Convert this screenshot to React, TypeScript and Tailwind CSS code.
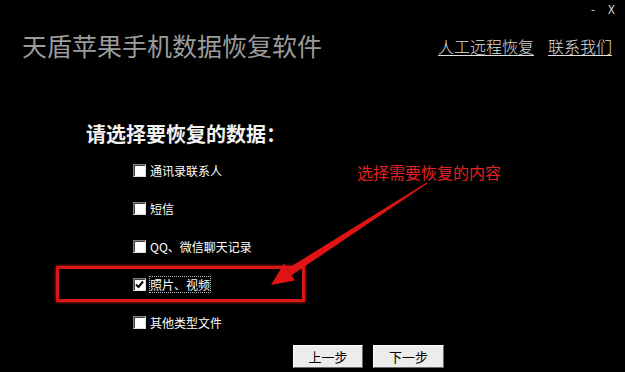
import { useState } from "react"

const items = ["通讯录联系人", "短信", "QQ、微信聊天记录", "照片、视频", "其他类型文件"]

function Box({ checked }: { checked: boolean }) {
  return (
    <span className="w-[13px] h-[13px] bg-white border border-t-[#808080] border-l-[#808080] border-b-[#e0e0e0] border-r-[#e0e0e0] shadow-[inset_1px_1px_0_#404040] flex items-center justify-center shrink-0">
      {checked && (
        <svg width="9" height="9" viewBox="0 0 9 9">
          <path d="M1 4.5 L3.5 7 L8 1.5" stroke="#000" strokeWidth="2" fill="none" />
        </svg>
      )}
    </span>
  )
}

export default function App() {
  const [sel, setSel] = useState([false, false, false, true, false])

  return (
    <div className="relative w-[625px] h-[372px] bg-black overflow-hidden font-['Noto_Sans_CJK_SC',sans-serif]">
      {/* window controls */}
      <div className="h-[18px] pt-[2px] flex justify-end items-start gap-[13px] pr-[10px] text-[12px] leading-[14px] text-[#d8d8d8]">
        <span>-</span>
        <span>X</span>
      </div>

      {/* header */}
      <div className="mt-[12px] h-[30px] flex items-center justify-between pl-[22px] pr-[13px]">
        <h1 className="text-[25px] leading-[30px] text-[#9c9c9c]">天盾苹果手机数据恢复软件</h1>
        <div className="flex gap-[14px] text-[16px] leading-[20px] font-light text-[#dedede] mt-[2px]">
          <a className="underline underline-offset-2 cursor-pointer">人工远程恢复</a>
          <a className="underline underline-offset-2 cursor-pointer">联系我们</a>
        </div>
      </div>

      <h2 className="mt-[62px] pl-[86px] h-[24px] text-[20px] leading-[24px] font-bold text-[#f2f2f2]">请选择要恢复的数据：</h2>

      {/* options */}
      <div className="mt-[5px] pl-[56px] flex flex-col">
        {items.map((t, i) =>
          i === 3 ? (
            <div key={t} className="h-[38px] flex items-center">
              <label className="w-[249px] h-[36px] border-[3px] border-[#d81818] shadow-[0_0_3px_#ff2020] flex items-center gap-[4px] pl-[74px] cursor-pointer" onClick={() => setSel(sel.map((v, j) => (j === i ? !v : v)))}>
                <Box checked={sel[i]} />
                <span className="text-[12px] leading-[15px] text-white outline outline-1 outline-dotted outline-[#bbb]">{t}</span>
              </label>
            </div>
          ) : (
            <label key={t} className="h-[38px] flex items-center gap-[4px] pl-[77px] cursor-pointer" onClick={() => setSel(sel.map((v, j) => (j === i ? !v : v)))}>
              <Box checked={sel[i]} />
              <span className="text-[12px] leading-[15px] text-white">{t}</span>
            </label>
          )
        )}
      </div>

      {/* buttons */}
      <div className="mt-[4px] pl-[293px] flex gap-[10px]">
        <button className="w-[70px] h-[23px] bg-[#ececec] border border-t-white border-l-white border-b-[#6a6a6a] border-r-[#6a6a6a] text-[13px] text-black">上一步</button>
        <button className="w-[71px] h-[23px] bg-[#ececec] border border-t-white border-l-white border-b-[#6a6a6a] border-r-[#6a6a6a] text-[13px] text-black">下一步</button>
      </div>

      {/* annotation */}
      <span className="absolute left-[357px] top-[162px] text-[16px] leading-[20px] text-[#e82020]">选择需要恢复的内容</span>
      <svg className="absolute left-0 top-0 pointer-events-none" width="625" height="372">
        <polygon points="427.4,183.6 291.6,275.3 287.4,268.7 426.6,182.4" fill="#e01414" />
        <polygon points="271,285 284,263.6 295,280.5" fill="#e01414" />
      </svg>
    </div>
  )
}
